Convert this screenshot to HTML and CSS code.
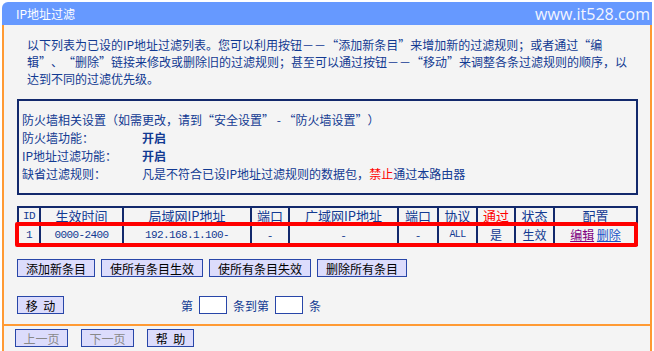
FILE: index.html
```html
<!DOCTYPE html>
<html lang="zh-CN">
<head>
    <meta charset="UTF-8">
    <title>IP地址过滤</title>
    <link rel="stylesheet" href="styles.css">
</head>
<body>
    <div class="panel">
        <!-- Title bar -->
        <div class="panel-head">
            <span class="panel-title">IP地址过滤</span>
            <span class="watermark">www.it528.com</span>
        </div>

        <div class="panel-body">
            <p class="intro">以下列表为已设的IP地址过滤列表。您可以利用按钮－－<span class="lq">“</span>添加新条目<span class="rq">”</span>来增加新的过滤规则；或者通过<span class="lq">“</span>编<br>辑<span class="rq">”</span>、<span class="lq">“</span>删除<span class="rq">”</span>链接来修改或删除旧的过滤规则；甚至可以通过按钮－－<span class="lq">“</span>移动<span class="rq">”</span>来调整各条过滤规则的顺序，以<br>达到不同的过滤优先级。</p>

            <!-- Firewall settings -->
            <div class="fw-box">
                <div class="fw-line">防火墙相关设置（如需更改，请到<span class="lq">“</span>安全设置<span class="rq">”</span> - <span class="lq">“</span>防火墙设置<span class="rq">”</span>）</div>
                <div class="fw-grid">
                    <span>防火墙功能：</span><b>开启</b>
                    <span>IP地址过滤功能：</span><b>开启</b>
                    <span>缺省过滤规则：</span><span>凡是不符合已设IP地址过滤规则的数据包，<em class="deny">禁止</em>通过本路由器</span>
                </div>
            </div>

            <!-- Rules table -->
            <div class="rule-wrap">
                <table class="rules">
                    <colgroup>
                        <col style="width:22px"><col style="width:83px"><col style="width:128px"><col style="width:38px"><col style="width:109px">
                        <col style="width:40px"><col style="width:39px"><col style="width:38px"><col style="width:39px"><col style="width:83px">
                    </colgroup>
                    <tr class="head-row">
                        <th class="mono">ID</th>
                        <th>生效时间</th>
                        <th>局域网IP地址</th>
                        <th>端口</th>
                        <th>广域网IP地址</th>
                        <th>端口</th>
                        <th>协议</th>
                        <th class="deny">通过</th>
                        <th>状态</th>
                        <th>配置</th>
                    </tr>
                    <tr class="data-row">
                        <td class="mono">1</td>
                        <td class="mono">0000-2400</td>
                        <td class="mono">192.168.1.100-</td>
                        <td>-</td>
                        <td>-</td>
                        <td>-</td>
                        <td class="mono small">ALL</td>
                        <td>是</td>
                        <td>生效</td>
                        <td><a href="#" class="edit">编辑</a> <a href="#" class="del">删除</a></td>
                    </tr>
                </table>
                <div class="highlight"></div>
            </div>

            <div class="btn-row">
                <button class="btn">添加新条目</button>
                <button class="btn">使所有条目生效</button>
                <button class="btn">使所有条目失效</button>
                <button class="btn">删除所有条目</button>
            </div>

            <div class="move-row">
                <button class="btn btn-move">移&nbsp;&nbsp;动</button>
                <div class="move-fields">
                    <span>第</span>
                    <input type="text" class="num-input">
                    <span>条到第</span>
                    <input type="text" class="num-input">
                    <span>条</span>
                </div>
            </div>
        </div>

        <div class="panel-foot">
            <button class="btn btn-page" disabled>上一页</button>
            <button class="btn btn-page" disabled>下一页</button>
            <button class="btn btn-help">帮&nbsp;&nbsp;助</button>
        </div>
    </div>
</body>
</html>
```

FILE: styles.css
```css
* {
    margin: 0;
    padding: 0;
    box-sizing: border-box;
}

body {
    font-family: 'Noto Sans CJK SC', sans-serif;
    font-size: 12px;
    background: #fff;
    color: #123a92;
}

/* full width quote marks, as in the old bitmap font */
.lq,
.rq {
    display: inline-block;
    width: 12px;
}

.lq {
    text-align: right;
}

.rq {
    text-align: left;
}

.panel {
    width: 650px;
    margin: 2px 0 0 2px;
}

/* Title bar */
.panel-head {
    height: 23px;
    background: #6699ff;
    border-top-left-radius: 6px;
    display: flex;
    justify-content: space-between;
    align-items: center;
    padding: 0 2px 0 14px;
    color: #fff;
}

.panel-title {
    font-size: 12px;
}

.watermark {
    font-family: 'Open Sans', sans-serif;
    font-size: 16px;
    color: #f2f5ff;
}

.panel-body {
    background: #f4f4f4;
    border-left: 2px solid #ff9a33;
    border-right: 2px solid #ff9a33;
    padding: 11px 13px 10px 13px;
}

.intro {
    line-height: 17px;
    padding-left: 10px;
    margin-bottom: 12px;
    white-space: nowrap;
}

/* Firewall box */
.fw-box {
    border: 2px solid #12296c;
    padding: 10px 3px 10px;
    line-height: 18px;
    margin-bottom: 11px;
    width: 621px;
}

.fw-grid {
    display: grid;
    grid-template-columns: 120px auto;
}

.fw-grid b {
    font-weight: bold;
}

.deny {
    color: #f00;
    font-style: normal;
}

/* Rules table */
.rule-wrap {
    position: relative;
    width: 619px;
}

.rules {
    width: 619px;
    border-collapse: collapse;
    table-layout: fixed;
    text-align: center;
}

.rules th,
.rules td {
    border: 2px solid #12296c;
    font-weight: normal;
    white-space: nowrap;
    overflow: hidden;
}

.head-row th {
    height: 18px;
    line-height: 14px;
    font-size: 13px;
}

.head-row th.mono {
    font-size: 11px;
}

.data-row td {
    height: 20px;
    line-height: 16px;
}

.mono {
    font-family: 'Liberation Mono', monospace;
    font-size: 11px;
    letter-spacing: -0.6px;
}

.small {
    font-size: 10px;
}

.edit {
    color: #800080;
}

.del {
    color: #1a55c8;
}

.highlight {
    position: absolute;
    top: 16px;
    left: -2px;
    right: -2px;
    height: 25px;
    border: 4px solid #f00;
    border-radius: 2px;
}

/* Buttons */
.btn {
    font-family: 'Noto Sans CJK SC', sans-serif;
    font-size: 12px;
    line-height: 15px;
    height: 18px;
    padding: 0 8px;
    background: #dcdcfc;
    border: 1px solid #2846a8;
    color: #000;
    border-radius: 0;
    white-space: nowrap;
}

.btn-row {
    display: flex;
    gap: 6px;
    margin-top: 13px;
}

.move-row {
    display: flex;
    align-items: center;
    margin-top: 19px;
}

.btn-move {
    width: 47px;
    padding: 0;
}

.move-fields {
    display: flex;
    align-items: center;
    gap: 6px;
    margin-left: 117px;
}

.num-input {
    width: 28px;
    height: 18px;
    background: #fff;
    border: 1px solid #2846a8;
}

/* Footer */
.panel-foot {
    background: #f4f4f4;
    border: 2px solid #ff9a33;
    padding: 3px 11px 4px;
    display: flex;
    gap: 13px;
}

.btn-page {
    width: 53px;
    padding: 0;
}

.btn-page:disabled {
    color: #888;
}

.btn-help {
    width: 47px;
    padding: 0;
}
```
